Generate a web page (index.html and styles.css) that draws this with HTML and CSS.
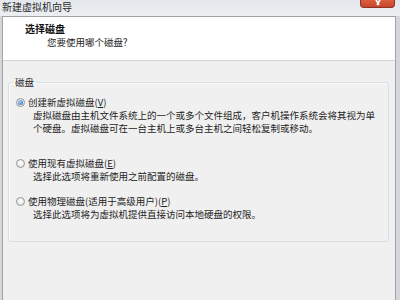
FILE: index.html
```html
<!DOCTYPE html>
<html lang="zh-CN">
<head>
    <meta charset="UTF-8">
    <title>新建虚拟机向导</title>
    <link rel="stylesheet" href="styles.css">
</head>
<body>
    <div class="titlebar">
        <span class="title">新建虚拟机向导</span>
        <span class="close">
            <svg width="8" height="6" viewBox="0 0 8 6"><path d="M1 -2 L5 5 M7 -2 L3 5" stroke="#fff" stroke-width="1.6" fill="none"/></svg>
        </span>
    </div>

    <div class="window">
        <div class="header">
            <div class="header-title">选择磁盘</div>
            <div class="header-sub">您要使用哪个磁盘?</div>
        </div>

        <div class="content">
            <fieldset class="group">
                <legend>磁盘</legend>

                <div class="option option-first">
                    <div class="option-label">
                        <span class="radio checked"></span>
                        <span>创建新虚拟磁盘(<u>V</u>)</span>
                    </div>
                    <p class="option-desc">虚拟磁盘由主机文件系统上的一个或多个文件组成，客户机操作系统会将其视为单<br>个硬盘。虚拟磁盘可在一台主机上或多台主机之间轻松复制或移动。</p>
                </div>

                <div class="option">
                    <div class="option-label">
                        <span class="radio"></span>
                        <span>使用现有虚拟磁盘(<u>E</u>)</span>
                    </div>
                    <p class="option-desc">选择此选项将重新使用之前配置的磁盘。</p>
                </div>

                <div class="option">
                    <div class="option-label">
                        <span class="radio"></span>
                        <span>使用物理磁盘(适用于高级用户)(<u>P</u>)</span>
                    </div>
                    <p class="option-desc">选择此选项将为虚拟机提供直接访问本地硬盘的权限。</p>
                </div>
            </fieldset>
        </div>
    </div>
</body>
</html>
```

FILE: styles.css
```css
body {
    margin: 0;
    width: 400px;
    height: 300px;
    overflow: hidden;
    background-color: #d3d7dc; /* window frame */
    font-family: "Noto Sans CJK SC", "Noto Sans", sans-serif;
    font-size: 9.5px;
    color: #1e1e1e;
}

.titlebar {
    height: 16px;
    display: flex;
    justify-content: space-between;
    align-items: flex-start;
    background: linear-gradient(#e3e7ec, #eceff2);
}

.title {
    font-size: 10px;
    line-height: 13px;
    padding-left: 2px;
    color: #2a2a2a;
}

.close {
    width: 33px;
    height: 7px;
    margin-right: 5px;
    background: linear-gradient(#d9603f, #c8452c);
    border: 1px solid #8e3322;
    border-top: none;
    border-radius: 0 0 4px 4px;
    display: flex;
    justify-content: center;
    align-items: flex-start;
}

.window {
    margin: 0 4px 0 2px;
    height: 284px;
    border: 1px solid #a3a3a3;
    border-bottom: none;
    background-color: #f0f0f0;
}

.header {
    height: 44px;
    padding: 5px 0 0 22px;
    box-sizing: border-box;
    background-color: #fff;
    border-bottom: 1px solid #d5d5d5;
}

.header-title {
    font-size: 10px;
    font-weight: bold;
    line-height: 13px;
    color: #111;
}

.header-sub {
    margin-left: 22px;
    line-height: 15px;
    color: #222;
}

.content {
    padding: 15px 6px 0 5px;
}

.group {
    margin: 0;
    padding: 7px 0 20px 0;
    border: 1px solid #d5dfe5;
    border-radius: 3px;
    box-shadow: inset 1px 1px 0 #fafafa;
}

.group legend {
    margin-left: 4px;
    padding: 0 2px;
    line-height: 13px;
}

.option {
    margin-bottom: 12px;
}

.option:last-child {
    margin-bottom: 0;
}

.option-first {
    margin-bottom: 22px;
}

.option-label {
    display: flex;
    align-items: center;
    gap: 3px;
    padding-left: 7px;
    line-height: 13px;
}

.option-label u {
    text-underline-offset: 1px;
}

.radio {
    width: 9px;
    height: 9px;
    box-sizing: border-box;
    border: 1px solid #949697;
    border-radius: 50%;
    background: radial-gradient(circle at 50% 40%, #ffffff, #dcdcdc);
    display: flex;
    align-items: center;
    justify-content: center;
}

.radio.checked::after {
    content: '';
    width: 5px;
    height: 5px;
    border-radius: 50%;
    background: radial-gradient(circle at 40% 35%, #9cd0f5, #2c68b5);
}

.option-desc {
    margin: 0;
    padding-left: 24px;
    line-height: 13px;
}
```
